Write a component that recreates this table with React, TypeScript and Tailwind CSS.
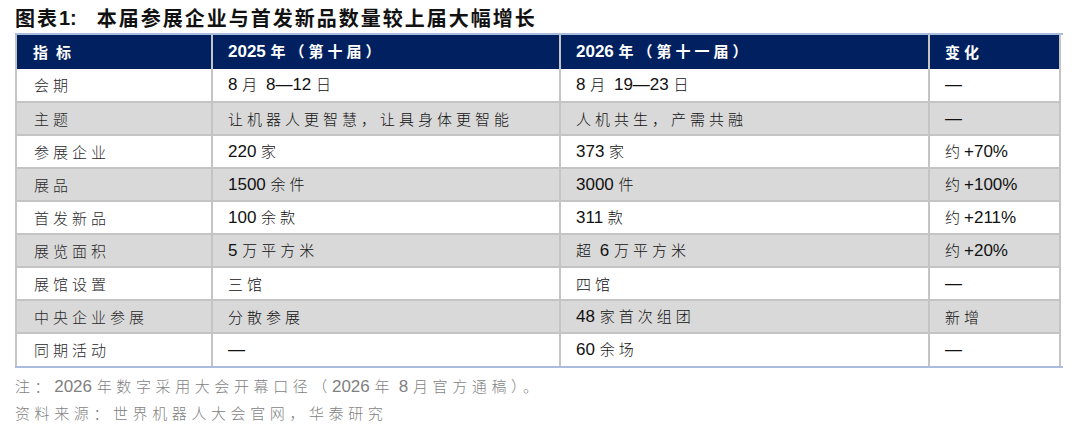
import React from "react";

const CJK = /([\u3000-\u303f\u4e00-\u9fff\uff00-\uffef]+)/;

function Mixed({ text, bold = false, note = false }: { text: string; bold?: boolean; note?: boolean }) {
  const parts = text.split(CJK).filter((p) => p !== "");
  return (
    <>
      {parts.map((p, i) =>
        CJK.test(p) ? (
          <span
            key={i}
            className={`font-['Noto_Sans_CJK_SC',sans-serif] text-[15px] ${note ? "tracking-[4.6px]" : "tracking-[4px]"} ${bold ? "font-bold" : "font-light"}`}
          >
            {p}
          </span>
        ) : (
          <span key={i} className={`font-['Liberation_Sans',Arial,sans-serif] text-[17px] ${bold ? "font-bold" : ""}`}>
            {p}
          </span>
        )
      )}
    </>
  );
}

const rows: [string, string, string, string][] = [
  ["会期", "8 月 8—12 日", "8 月 19—23 日", "—"],
  ["主题", "让机器人更智慧，让具身体更智能", "人机共生，产需共融", "—"],
  ["参展企业", "220 家", "373 家", "约+70%"],
  ["展品", "1500 余件", "3000 件", "约+100%"],
  ["首发新品", "100 余款", "311 款", "约+211%"],
  ["展览面积", "5 万平方米", "超 6 万平方米", "约+20%"],
  ["展馆设置", "三馆", "四馆", "—"],
  ["中央企业参展", "分散参展", "48 家首次组团", "新增"],
  ["同期活动", "—", "60 余场", "—"],
];

const head = ["指标", "2025 年（第十届）", "2026 年（第十一届）", "变化"];
const widths = ["w-[196px]", "w-[348px]", "w-[369px]", "w-[131px]"];

export default function App() {
  return (
    <div className="h-[430px] w-[1080px] bg-white text-[#1a1a1a]">
      <h1 className="flex h-[33px] items-center pl-[15px] pt-[2px] text-[#111]">
        <span className="font-['Noto_Sans_CJK_SC',sans-serif] text-[20px] font-bold tracking-[2px]">图表</span>
        <span className="font-['Liberation_Sans',Arial,sans-serif] text-[20px] font-bold">1:</span>
        <span className="ml-[20px] font-['Noto_Sans_CJK_SC',sans-serif] text-[20px] font-bold tracking-[2px]">
          本届参展企业与首发新品数量较上届大幅增长
        </span>
      </h1>

      <div className="ml-[15px] w-[1048px] border-y-2 border-[#a9bcdc]">
        <table className="w-[1044px] table-fixed border-collapse">
          <thead>
            <tr className="h-[34px] bg-[#002060] text-white">
              {head.map((h, i) => (
                <th
                  key={h}
                  className={`${widths[i]} border-x-2 border-[#c4c4c4] text-left align-middle font-bold ${i === 0 ? "pl-[16px]" : "pl-[15px]"} ${i === 0 ? "[&>span]:tracking-[8px]" : ""}`}
                >
                  <Mixed text={h} bold />
                </th>
              ))}
            </tr>
          </thead>
          <tbody>
            {rows.map((r, ri) => (
              <tr key={r[0]} className={`h-[33px] ${ri % 2 === 1 ? "bg-[#d9d9d9]" : "bg-white"}`}>
                {r.map((c, ci) => (
                  <td
                    key={ci}
                    className={`border-2 border-[#c4c4c4] align-middle ${ri === 0 ? "border-t-0" : ""} ${ri === rows.length - 1 ? "border-b-0" : ""} ${ci === 0 ? "pl-[17px]" : "pl-[15px]"} ${ci === 0 ? "text-[#2a2a2a]" : "text-[#111]"}`}
                  >
                    <Mixed text={c} />
                  </td>
                ))}
              </tr>
            ))}
          </tbody>
        </table>
      </div>

      <div className="mt-[4px] pl-[15px] text-[#7f7f7f] [&_span]:text-[#7f7f7f]">
        <p className="h-[27px] leading-[27px]">
          <Mixed text="注：2026 年数字采用大会开幕口径（2026 年 8 月官方通稿）。" note />
        </p>
        <p className="h-[27px] leading-[27px]">
          <Mixed text="资料来源：世界机器人大会官网，华泰研究" note />
        </p>
      </div>
    </div>
  );
}
